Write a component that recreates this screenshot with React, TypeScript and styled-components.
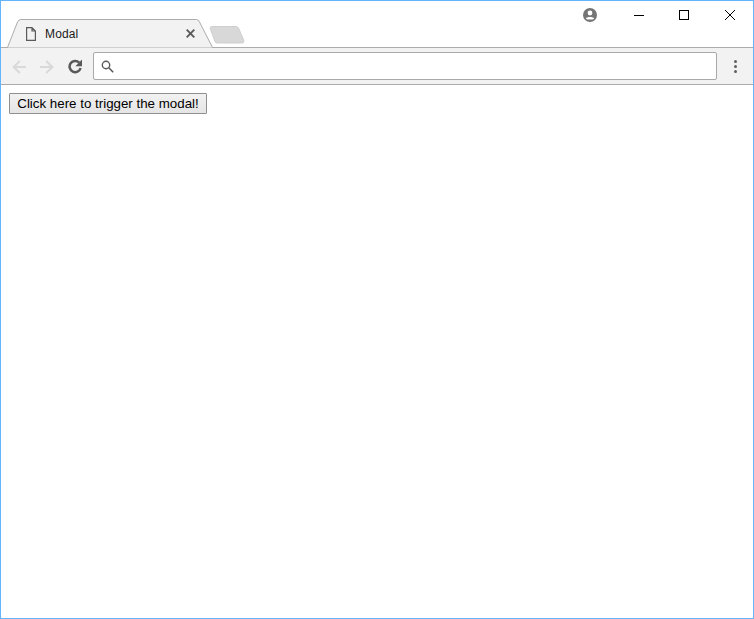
import styled, { createGlobalStyle } from 'styled-components';

const GlobalStyle = createGlobalStyle`
  html, body {
    margin: 0;
    padding: 0;
    background: #ffffff;
  }
`;

const Frame = styled.div`
  box-sizing: border-box;
  width: 754px;
  height: 619px;
  border: 1px solid #64b4fb;
  background: #ffffff;
  display: flex;
  flex-direction: column;
  font-family: 'Liberation Sans', Arial, sans-serif;
  overflow: hidden;
`;

const TitleBar = styled.header`
  box-sizing: border-box;
  height: 47px;
  flex-shrink: 0;
  display: flex;
  align-items: flex-start;
  border-bottom: 1px solid #acacac;
  padding-left: 6px;
`;

const Tab = styled.div`
  position: relative;
  box-sizing: border-box;
  width: 206px;
  height: 29px;
  margin-top: 18px;
  flex-shrink: 0;
  display: flex;
  align-items: center;
  padding: 0 18px 0 19px;
`;

const TabShape = styled.svg`
  position: absolute;
  left: 0;
  top: 0;
`;

const TabIcon = styled.svg`
  position: relative;
  flex-shrink: 0;
`;

const TabTitle = styled.span`
  position: relative;
  flex: 1;
  margin-left: 9px;
  font-size: 12px;
  letter-spacing: 0.15px;
  color: #1a1a1a;
`;

const NewTab = styled.svg`
  flex-shrink: 0;
  margin: 25px 0 0 -4px;
`;

const WindowControls = styled.div`
  margin-left: auto;
  display: flex;
  align-items: center;
  height: 28px;
`;

const ProfileSlot = styled.div`
  width: 14px;
  height: 14px;
  margin-right: 20px;
  display: flex;
`;

const ControlButton = styled.div<{ $width: number }>`
  width: ${(p) => p.$width}px;
  height: 28px;
  display: flex;
  align-items: center;
  justify-content: center;
`;

const Toolbar = styled.nav`
  box-sizing: border-box;
  height: 37px;
  flex-shrink: 0;
  display: flex;
  align-items: center;
  background: #f2f2f2;
  border-bottom: 1px solid #acacac;
  padding: 0 16px 0 11px;
`;

const NavIcon = styled.svg`
  flex-shrink: 0;
  margin-right: 14px;
`;

const ReloadIcon = styled(NavIcon)`
  margin-right: 11px;
`;

const AddressBar = styled.div`
  box-sizing: border-box;
  flex: 1;
  height: 28px;
  display: flex;
  align-items: center;
  padding-left: 7px;
  background: #ffffff;
  border: 1px solid #a9a9a9;
  border-radius: 2px;
`;

const MenuDots = styled.div`
  width: 3px;
  margin-left: 17px;
  display: flex;
  flex-direction: column;
  gap: 2px;
`;

const Dot = styled.span`
  width: 3px;
  height: 3px;
  border-radius: 50%;
  background: #5f5f5f;
`;

const Page = styled.main`
  flex: 1;
  padding: 8px;
`;

const TriggerButton = styled.button`
  box-sizing: border-box;
  display: block;
  width: 198px;
  height: 21px;
  padding: 0;
  border: 1px solid #8f8f8f;
  border-radius: 1px;
  background: linear-gradient(#f2f2f2, #e5e5e5);
  font-family: 'Liberation Sans', Arial, sans-serif;
  font-size: 13.33px;
  color: #000000;
`;

export default function App() {
  return (
    <>
      <GlobalStyle />
      <Frame>
        <TitleBar>
          <Tab>
            <TabShape width="206" height="29" viewBox="0 0 206 29">
              <path
                d="M0.5 28.5 L10.5 3 Q11.5 0.5 14 0.5 L189.5 0.5 Q191.5 0.5 192.5 3 L205.5 28.5 Z"
                fill="#f2f2f2"
              />
              <path
                d="M0.5 28.5 L10.5 3 Q11.5 0.5 14 0.5 L189.5 0.5 Q191.5 0.5 192.5 3 L205.5 28.5"
                fill="none"
                stroke="#acacac"
              />
            </TabShape>
            <TabIcon width="10" height="14" viewBox="0 0 10 14">
              <path
                d="M0.6 0.6 H6 L9.4 4 V13.4 H0.6 Z M6 0.6 V4 H9.4"
                fill="none"
                stroke="#5a5a5a"
                strokeWidth="1.2"
              />
            </TabIcon>
            <TabTitle>Modal</TabTitle>
            <TabIcon width="9" height="9" viewBox="0 0 9 9">
              <path d="M0.7 0.7 L8.3 8.3 M8.3 0.7 L0.7 8.3" stroke="#5a5a5a" strokeWidth="1.9" />
            </TabIcon>
          </Tab>
          <NewTab width="36" height="18" viewBox="0 0 36 18">
            <path
              d="M2.5 0.5 H27 Q28.5 0.5 29.5 2 L34.8 14.5 Q35.2 17 33 17 H8 Q6.5 17 6 15.5 L1.2 2.5 Q1 0.5 2.5 0.5 Z"
              fill="#d8d8d8"
              stroke="#cfcfcf"
            />
          </NewTab>
          <WindowControls>
            <ProfileSlot>
              <svg width="14" height="14" viewBox="0 0 14 14">
                <circle cx="7" cy="7" r="7" fill="#757575" />
                <circle cx="7" cy="5" r="2.4" fill="#ffffff" />
                <path d="M2.8 10.4 C4 8.4 10 8.4 11.2 10.4 C10 12 4 12 2.8 10.4 Z" fill="#ffffff" />
              </svg>
            </ProfileSlot>
            <ControlButton $width={44}>
              <svg width="10" height="10" viewBox="0 0 10 10">
                <path d="M0 5.5 H10" stroke="#000000" />
              </svg>
            </ControlButton>
            <ControlButton $width={46}>
              <svg width="10" height="10" viewBox="0 0 10 10">
                <rect x="0.5" y="0.5" width="9" height="9" fill="none" stroke="#000000" />
              </svg>
            </ControlButton>
            <ControlButton $width={46}>
              <svg width="10" height="10" viewBox="0 0 10 10">
                <path d="M0 0 L10 10 M10 0 L0 10" stroke="#000000" />
              </svg>
            </ControlButton>
          </WindowControls>
        </TitleBar>
        <Toolbar>
          <NavIcon width="14" height="16" viewBox="0 0 14 16">
            <path d="M14 9 H2 M7.8 3 L1.6 9 L7.8 15" fill="none" stroke="#d9d9d9" strokeWidth="2" />
          </NavIcon>
          <NavIcon width="14" height="16" viewBox="0 0 14 16">
            <path d="M0 9 H12 M6.2 3 L12.4 9 L6.2 15" fill="none" stroke="#d9d9d9" strokeWidth="2" />
          </NavIcon>
          <ReloadIcon width="14" height="16" viewBox="0 0 14 16">
            <path d="M11.2 4.6 A5.6 5.6 0 1 0 12.6 10" fill="none" stroke="#5a5a5a" strokeWidth="2.5" />
            <path d="M14 1.6 V8.2 H7.4 Z" fill="#5a5a5a" />
          </ReloadIcon>
          <AddressBar>
            <svg width="13" height="13" viewBox="0 0 13 13">
              <circle cx="5" cy="5" r="3.7" fill="none" stroke="#5a5a5a" strokeWidth="1.4" />
              <path d="M7.8 7.8 L12.2 12.2" stroke="#5a5a5a" strokeWidth="1.6" />
            </svg>
          </AddressBar>
          <MenuDots>
            <Dot />
            <Dot />
            <Dot />
          </MenuDots>
        </Toolbar>
        <Page>
          <TriggerButton>Click here to trigger the modal!</TriggerButton>
        </Page>
      </Frame>
    </>
  );
}
